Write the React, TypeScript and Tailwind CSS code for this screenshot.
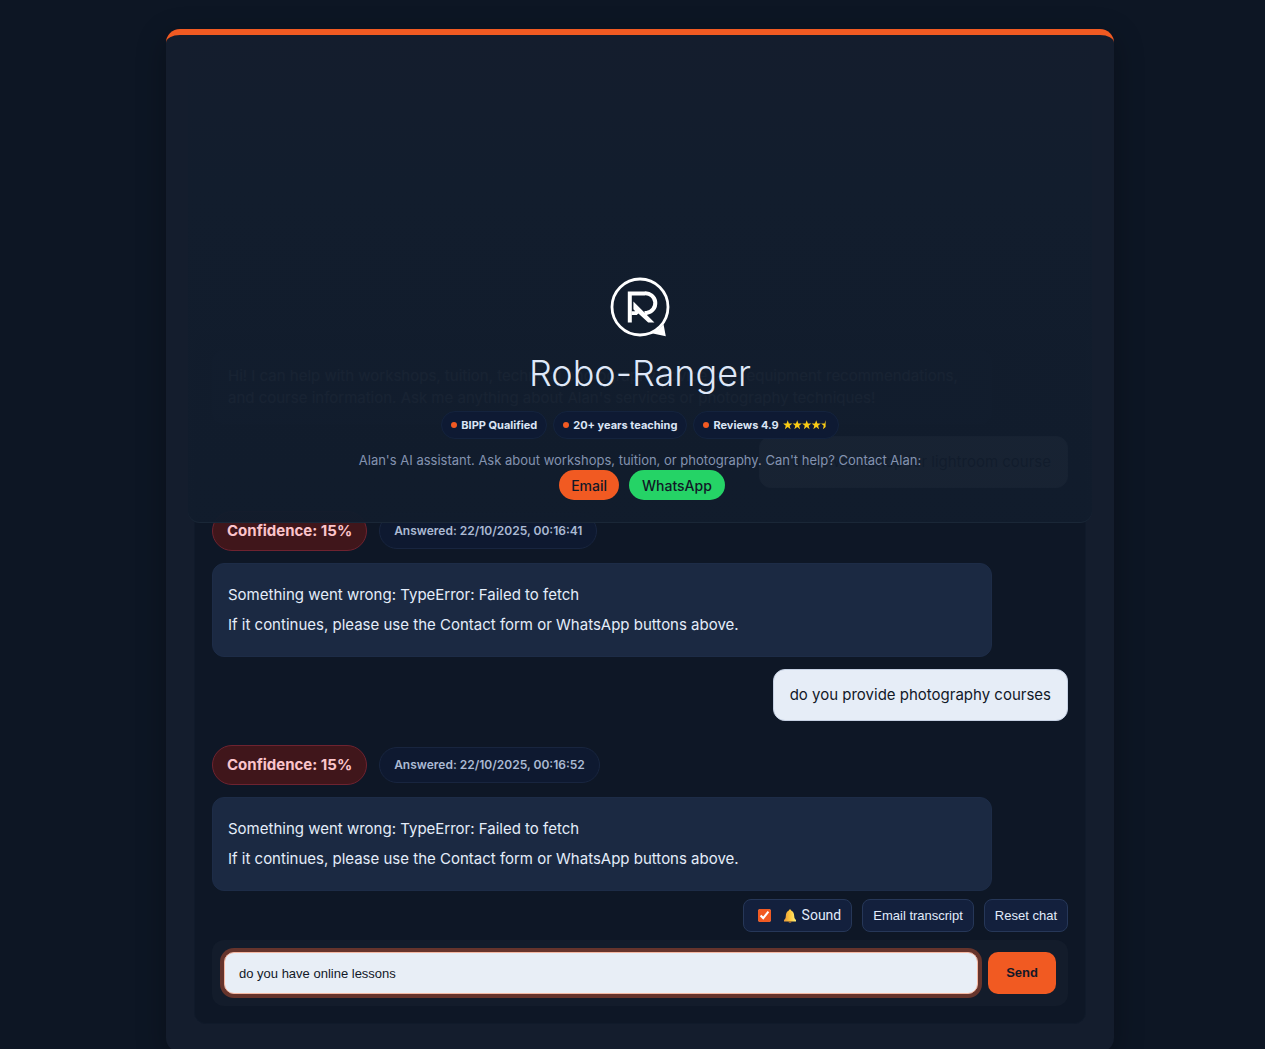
import React from "react";

function Logo() {
  return (
    <svg viewBox="0 0 60 60" className="size-15" role="img" aria-label="Robo-Ranger logo">
      <circle cx="30" cy="30" r="28" fill="none" stroke="#fff" strokeWidth="2.8" />
      <path d="M40.5 56 Q49 53.5 53.5 47 L55.8 59.3 Z" fill="#fff" />
      <path d="M19.8 45.6V16.4H34.5A9.7 9.7 0 0 1 36.5 35.9H34.5" fill="none" stroke="#fff" strokeWidth="4" />
      <path d="M23.4 24.6L44.4 45.6H38.2L28.4 36.6L26.8 38H21.5V34.2H25.2L23.4 32.2Z" fill="#fff" />
    </svg>
  );
}

function Bell() {
  return (
    <svg viewBox="0 0 14 14" className="size-[14px]" aria-hidden="true">
      <defs>
        <linearGradient id="bell" x1="0" x2="1">
          <stop offset="0" stopColor="#e8963a" />
          <stop offset=".5" stopColor="#ffc83d" />
          <stop offset="1" stopColor="#fff07a" />
        </linearGradient>
      </defs>
      <path d="M7 .5C8 .5 8.3 1.2 8.3 1.8C10.5 2.4 11 4.5 11.2 7C11.3 9.3 12 10.2 13 11V12.5H1V11C2.2 10.2 2.7 9.3 2.8 7C3 4.5 3.5 2.4 5.7 1.8C5.7 1.2 6 .5 7 .5Z" fill="url(#bell)" />
      <path d="M5.4 12.5H8.6A1.6 1.2 0 0 1 5.4 12.5Z" fill="#c9782c" />
    </svg>
  );
}

function Stars() {
  const xs = [0, 1, 2, 3, 4];
  return (
    <svg viewBox="0 0 46 10" className="h-[10px] w-[46px]" role="img" aria-label="4.9 out of 5 stars">
      <defs>
        <clipPath id="rating">
          <rect width="42.6" height="10" />
        </clipPath>
      </defs>
      <g clipPath="url(#rating)">
        {xs.map((i) => (
          <path
            key={i}
            transform={`translate(${i * 9.5} 0)`}
            d="M4.7 .3L5.9 3.6H9.3L6.6 5.7L7.6 9.2L4.7 7.1L1.8 9.2L2.8 5.7L.1 3.6H3.5Z"
            fill="#facc15"
          />
        ))}
      </g>
    </svg>
  );
}

function Badge({ children }: { children: React.ReactNode }) {
  return (
    <li className="flex h-7 items-center gap-1 rounded-full border border-[#14233d] bg-[#0e1a33] px-[9px] text-[11px] font-bold text-[#dbe5f5]">
      <span className="size-1.5 rounded-full bg-[#f15a22]" />
      {children}
    </li>
  );
}

function Meta({ time }: { time: string }) {
  return (
    <div className="flex items-center gap-3">
      <span className="flex h-10 items-center rounded-full border border-[#6e2330] bg-[#40161b] px-[14px] text-[15px] font-bold text-[#fbc4cb]">
        Confidence: 15%
      </span>
      <span className="flex h-9 items-center rounded-full border border-[#18253f] bg-[#0e1930] px-[14px] text-[12px] font-semibold text-[#abbad3]">
        Answered: {time}
      </span>
    </div>
  );
}

function ErrorReply() {
  return (
    <div className="mt-3 w-full max-w-[780px] rounded-xl border border-[#1d2c47] bg-[#1b2942] px-[15px] py-[19px] text-[15px] text-[#e4edfa]">
      <p className="leading-6">Something went wrong: TypeError: Failed to fetch</p>
      <p className="mt-1.5 leading-6">If it continues, please use the Contact form or WhatsApp buttons above.</p>
    </div>
  );
}

function UserMessage({ children }: { children: React.ReactNode }) {
  return (
    <div className="ml-auto mt-3 w-fit rounded-xl border border-[#c5d0e2] bg-[#e6edf7] px-4 py-[13px] text-[15px] leading-6 text-[#111827]">
      {children}
    </div>
  );
}

export default function App() {
  return (
    <div className="min-h-screen overflow-hidden bg-[#0d1624] pt-[29px] pr-[9px] pl-6 font-['Inter',sans-serif]">
      <main className="mx-auto w-full max-w-[948px] rounded-[14px] border-t-6 border-[#f15a22] bg-[#141d2d] px-[22px] pb-7 shadow-[0_8px_30px_rgba(0,0,0,0.3)]">
        <header className="relative z-10 rounded-b-xl border-b border-[#1a2737] bg-linear-to-b from-[#141d2d]/0 via-[#121d2d]/97 via-30% to-[#111c2c]/97 pt-[242px] pb-[22px] text-center">
          <div className="flex justify-center">
            <Logo />
          </div>
          <h1 className="mt-[14px] text-[36px] leading-[44px] font-light text-[#dfe8f8]">Robo-Ranger</h1>
          <ul className="mt-4 flex flex-wrap justify-center gap-1.5">
            <Badge>BIPP Qualified</Badge>
            <Badge>20+ years teaching</Badge>
            <Badge>
              Reviews 4.9 <Stars />
            </Badge>
          </ul>
          <p className="mt-[11px] text-[13px] leading-5 text-[#8493b0]">
            Alan's AI assistant. Ask about workshops, tuition, or photography. Can't help? Contact Alan:
          </p>
          <nav className="flex justify-center gap-[10px] pl-1 text-[14px] font-medium text-[#111827]">
            <a href="#email" className="flex h-[30px] items-center rounded-full bg-[#f15a22] px-3">
              Email
            </a>
            <a href="#whatsapp" className="flex h-[30px] items-center rounded-full bg-[#25d366] px-[13px]">
              WhatsApp
            </a>
          </nav>
        </header>

        <section aria-label="Chat" className="mx-1.5 -mt-[190px] rounded-xl border border-[#101a2a] bg-[#0e1726] px-[17px] pt-4 pb-[17px]">
          <div className="w-full max-w-[780px] rounded-xl bg-[#1b2942] px-4 py-[15px] text-[15px] leading-[22px] text-[#e4edfa]">
            Hi! I can help with workshops, tuition, technical photography advice, and equipment recommendations, and course information. Ask me anything about Alan's services or photography techniques!
          </div>
          <UserMessage>is there workshop for lightroom course</UserMessage>
          <div className="mt-[23px]">
            <Meta time="22/10/2025, 00:16:41" />
            <ErrorReply />
          </div>
          <UserMessage>do you provide photography courses</UserMessage>
          <div className="mt-6">
            <Meta time="22/10/2025, 00:16:52" />
            <ErrorReply />
          </div>

          <div className="mt-2 flex flex-wrap justify-end gap-[10px] font-['Liberation_Sans',sans-serif] text-[13px] text-[#e1ebfb]">
            <label className="flex h-[33px] items-center rounded-lg border border-[#263758] bg-[#13203d] px-[10px] font-['Roboto',sans-serif] text-[14px]">
              <input type="checkbox" defaultChecked className="ml-1 size-[13px] accent-[#f15a22]" />
              <span className="ml-3 flex items-center gap-[5px]">
                <Bell /> Sound
              </span>
            </label>
            <button className="h-[33px] rounded-lg border border-[#263758] bg-[#13203d] px-[10px]">Email transcript</button>
            <button className="h-[33px] rounded-lg border border-[#263758] bg-[#13203d] px-[10px]">Reset chat</button>
          </div>

          <form className="mt-2 flex gap-[10px] rounded-xl bg-[#131c2b] p-3" onSubmit={(e) => e.preventDefault()}>
            <input
              aria-label="Message"
              defaultValue="do you have online lessons"
              className="h-[42px] min-w-0 flex-1 rounded-[10px] border border-[#f5b8a3] bg-[#e8eef6] px-[14px] font-['Liberation_Sans',sans-serif] text-[13px] text-[#111827] ring-4 ring-[#66342c] outline-none"
            />
            <button className="h-[42px] rounded-[10px] bg-[#f15a22] px-[18px] font-['Liberation_Sans',sans-serif] text-[13px] font-bold text-[#111827]">
              Send
            </button>
          </form>
        </section>
      </main>
    </div>
  );
}
